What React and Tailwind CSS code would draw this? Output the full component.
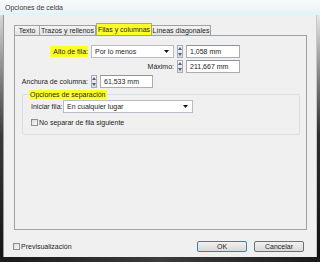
import React from 'react';

const font = { fontFamily: '"Liberation Sans", Arial, sans-serif' };

const Spinner = () => (
  <div className="w-[6px] h-[13px] border border-[#a5acb5] bg-gradient-to-b from-[#f6f6f6] to-[#dcdcdc] flex flex-col items-center justify-around">
    <svg width="4" height="3" viewBox="0 0 4 3"><path d="M2 0 L4 3 L0 3 Z" fill="#4d6185" /></svg>
    <svg width="4" height="3" viewBox="0 0 4 3"><path d="M0 0 L4 0 L2 3 Z" fill="#4d6185" /></svg>
  </div>
);

const Input = ({ value, w }) => (
  <div className={`${w} h-[13px] bg-white border border-[#abadb3] border-t-[#8e949e] flex items-center pl-[3px] text-[#1e1e1e] whitespace-nowrap`}>
    {value}
  </div>
);

const Select = ({ value, w }) => (
  <div className={`${w} h-[13px] bg-white border border-[#b9bcc2] flex items-center justify-between pl-[3px] pr-[4px] text-[#1e1e1e] whitespace-nowrap`}>
    <span>{value}</span>
    <svg width="5" height="3" viewBox="0 0 5 3"><path d="M0 0 L5 0 L2.5 3 Z" fill="#111" /></svg>
  </div>
);

const Check = () => (
  <div className="w-[7px] h-[7px] shrink-0 border border-[#8f8f8f] bg-gradient-to-br from-[#dcdcdc] to-[#fafafa]" />
);

const tabs = [
  { label: "Texto", w: "w-[26px]" },
  { label: "Trazos y rellenos", w: "w-[57px]" },
  { label: "Filas y columnas", w: "w-[56px]", active: true },
  { label: "Líneas diagonales", w: "w-[60px]" },
];

export default function App() {
  return (
    <div style={font} className="w-[320px] h-[262px] flex flex-col overflow-hidden text-[7px] leading-none text-[#1e1e1e] bg-[#2b2b2b] whitespace-nowrap">
      <div className="h-[15px] flex items-center pl-[5px] bg-gradient-to-b from-[#f7f9fa] via-[#f3f6f7] to-[#dff4f7] text-[#3a3a3a]">
        Opciones de celda
      </div>
      <div className="flex flex-1">
        <div className="w-[4px] bg-gradient-to-b from-[#d8d8d8] via-[#3a3a3a] to-[#151515] border-r border-[#9a9a9a]" />
        <div className="flex-1 bg-[#f0f0f0] flex flex-col border-r border-[#c8c8c8]">
          <div className="flex items-end h-[12px] mt-[8px] ml-[10px]">
            {tabs.map(({ label, w, active }) => (
              <div
                key={label}
                className={`${w} flex items-center justify-center border border-b-0 ${active ? "h-[12px] bg-[#ffff26] border-[#a8a8a8]" : "h-[10px] bg-gradient-to-b from-[#f4f4f4] to-[#e3e3e3] border-[#9da1a8] -ml-px first:ml-0"}`}
              >
                {label}
              </div>
            ))}
          </div>
          <div className="ml-[10px] w-[293px] h-[195px] border border-[#9da1a8] bg-[#f0f0f0] flex flex-col">
            <div className="flex flex-col gap-[2px] mt-[9px] ml-[7px]">
              <div className="flex items-center gap-[3px]">
                <div className="w-[66px] flex justify-end">
                  <span className="bg-[#ffff26] pl-[3px] py-[2px]">Alto de fila:</span>
                </div>
                <Select value="Por lo menos" w="w-[83px]" />
                <Spinner />
                <Input value="1,058 mm" w="w-[54px]" />
              </div>
              <div className="flex items-center gap-[3px]">
                <div className="w-[152px] text-right">Máximo:</div>
                <Spinner />
                <Input value="211,667 mm" w="w-[54px]" />
              </div>
              <div className="flex items-center gap-[3px]">
                <div className="w-[66px] flex justify-end">Anchura de columna:</div>
                <Spinner />
                <Input value="61,533 mm" w="w-[53px]" />
              </div>
            </div>
            <fieldset className="ml-[7px] mt-[2px] w-[278px] h-[45px] border border-[#d5dfe5] rounded-[2px] px-[8px]">
              <legend className="ml-[-2px] px-0">
                <span className="block bg-[#ffff26] px-[1px] py-[1px]">Opciones de separación</span>
              </legend>
              <div className="flex items-center gap-[2px] mt-[1px]">
                <span className="w-[30px]">Iniciar fila:</span>
                <Select value="En cualquier lugar" w="w-[130px]" />
              </div>
              <div className="flex items-center gap-[1px] mt-[6px]">
                <Check />
                <span>No separar de fila siguiente</span>
              </div>
            </fieldset>
          </div>
          <div className="flex items-center mt-[11px] ml-[9px] mr-[12px]">
            <Check />
            <span className="ml-[1px]">Previsualización</span>
            <div className="flex-1" />
            <button className="w-[50px] h-[11px] border border-[#3c7fb1] rounded-[2px] bg-gradient-to-b from-[#f2f2f2] to-[#d9d9d9] flex items-center justify-center">OK</button>
            <button className="ml-[7px] w-[50px] h-[11px] border border-[#707070] rounded-[2px] bg-gradient-to-b from-[#f2f2f2] to-[#d9d9d9] flex items-center justify-center">Cancelar</button>
          </div>
        </div>
        <div className="w-[3px] bg-gradient-to-b from-[#e8e8e8] via-[#2e2e2e] to-[#111]" />
      </div>
      <div className="h-[5px] bg-gradient-to-r from-[#1a1a1a] via-[#3c3c3c] to-[#1a1a1a]" />
    </div>
  );
}
